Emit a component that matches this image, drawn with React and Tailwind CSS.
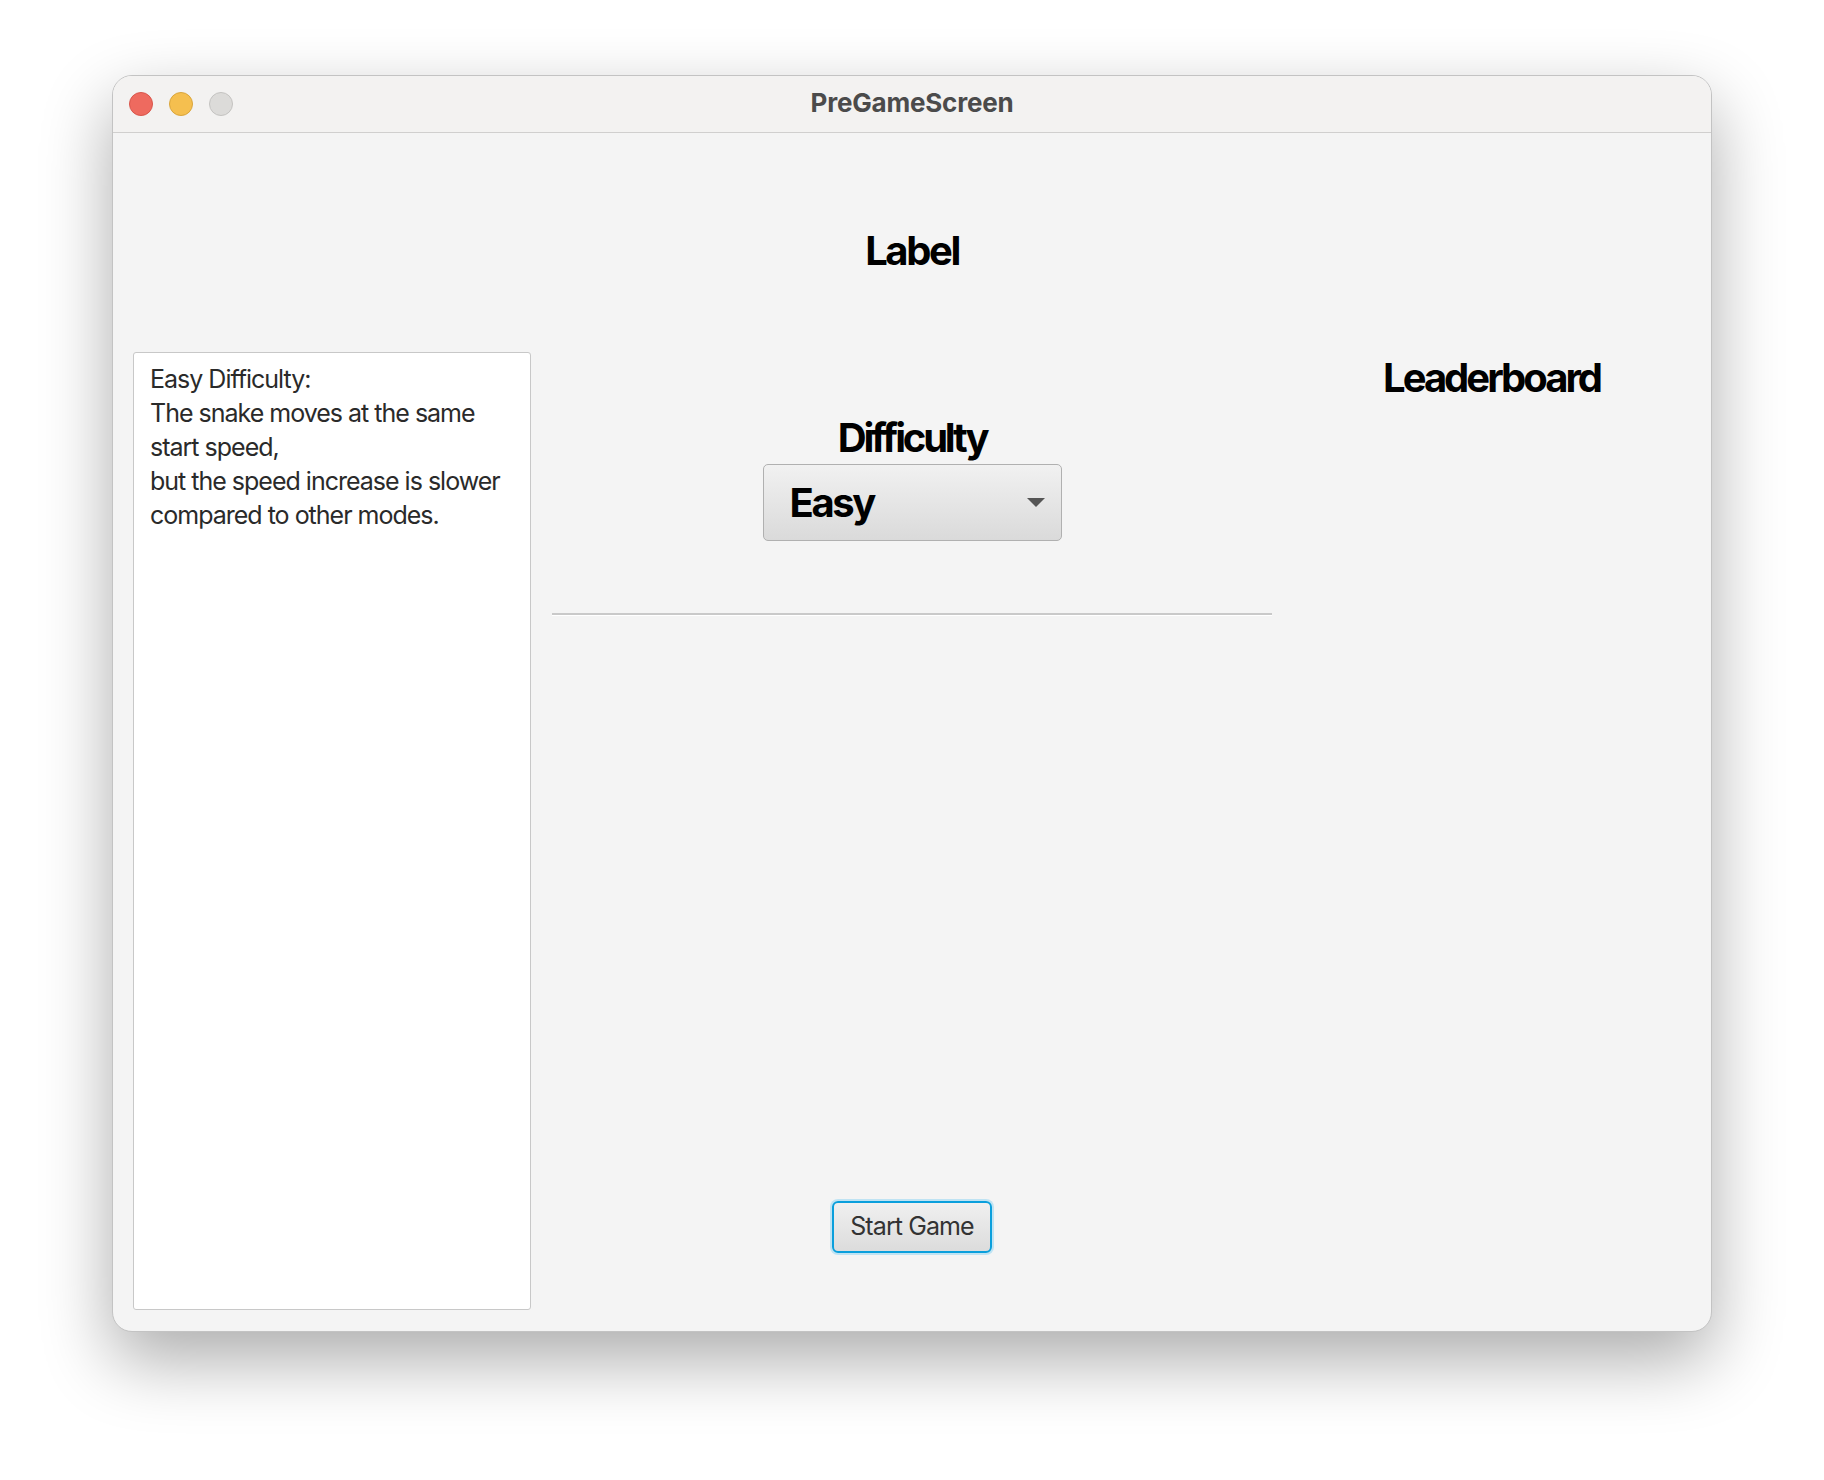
import React from "react";

const FONT = { fontFamily: "Inter, 'Noto Sans', 'Liberation Sans', sans-serif" };

function Lights() {
  return (
    <div className="flex items-center gap-4 pl-4">
      <span className="w-6 h-6 rounded-full bg-[#ee6a5f] border border-[#d8564c]" />
      <span className="w-6 h-6 rounded-full bg-[#f5bf4f] border border-[#d9a53c]" />
      <span className="w-6 h-6 rounded-full bg-[#dcdbd9] border border-[#c4c3c1]" />
    </div>
  );
}

export default function App() {
  return (
    <div className="min-h-[1480px] bg-white pt-[75px] pl-[112px]" style={FONT}>
      <div className="w-[1600px] h-[1257px] rounded-[20px] border border-[#c3c3c3] bg-[#f4f4f4] overflow-hidden shadow-[0_28px_70px_rgba(0,0,0,0.33)] flex flex-col">
        {/* title bar */}
        <div className="relative h-[57px] shrink-0 bg-[#f3f2f1] border-b border-[#d0cfce] flex items-center">
          <Lights />
          <div className="absolute inset-0 flex items-center justify-center pb-[3px] text-[26px] font-bold text-[#4b4b4b] tracking-[-0.2px]">
            PreGameScreen
          </div>
        </div>

        {/* top label */}
        <div className="h-[219px] shrink-0 flex justify-center pt-[98px]">
          <h1 className="text-[40px] leading-none font-bold text-black tracking-[-2.4px]">Label</h1>
        </div>

        {/* body */}
        <div className="flex-1 flex pl-[20px] pb-[20px]">
          <div className="w-[398px] h-[958px] bg-white border border-[#c8c8c8] rounded-[3px] pl-[16px] pt-[9px] text-[25px] leading-[34px] text-[#2a2a2a] tracking-[-1px] whitespace-nowrap">
            <div>Easy Difficulty:</div>
            <div>The snake moves at the same</div>
            <div>start speed,</div>
            <div>but the speed increase is slower</div>
            <div>compared to other modes.</div>
          </div>

          <div className="ml-[21px] w-[720px] flex flex-col items-center">
            <h2 className="mt-[66px] text-[40px] leading-none font-bold text-black tracking-[-3.2px]">Difficulty</h2>
            <button className="mt-[6px] w-[299px] h-[77px] rounded-[5px] border border-[#b0b0b0] bg-gradient-to-b from-[#f1f1f1] to-[#dadada] flex items-center justify-between pl-[26px] pr-[16px]">
              <span className="text-[40px] leading-none font-bold text-black tracking-[-2.4px]">Easy</span>
              <svg width="18" height="10" viewBox="0 0 18 10">
                <path d="M0 0 H18 L9 9 Z" fill="#555" />
              </svg>
            </button>
            <div className="mt-[72px] w-[720px] h-[3px] border-t-2 border-[#c9c9c9] border-b border-b-white" />
            <div className="flex-1" />
            <button className="mb-[58px] w-[160px] h-[52px] rounded-[6px] border-2 border-[#0a9fdc] ring-2 ring-[#bfe3f3] bg-gradient-to-b from-[#f0f0f0] to-[#dcdcdc] text-[25px] text-[#333] tracking-[-0.9px] flex items-center justify-center">
              Start Game
            </button>
          </div>

          <div className="flex-1 flex justify-center">
            <h2 className="mt-[6px] text-[40px] leading-none font-bold text-black tracking-[-3px]">Leaderboard</h2>
          </div>
        </div>
      </div>
    </div>
  );
}
